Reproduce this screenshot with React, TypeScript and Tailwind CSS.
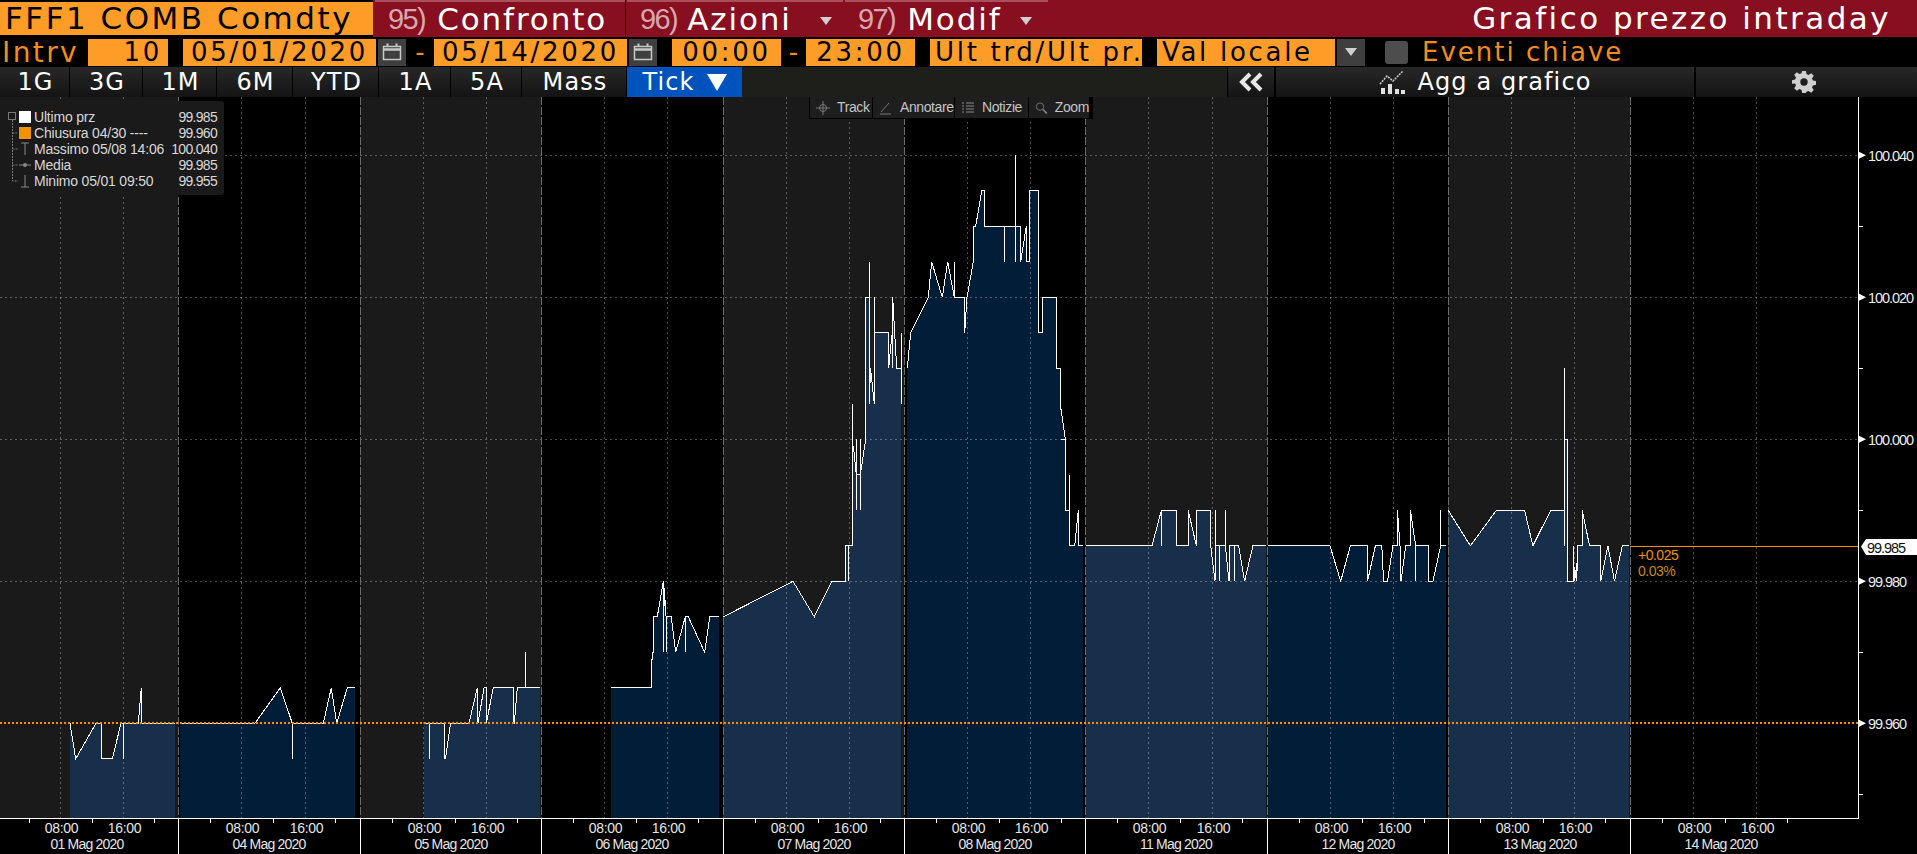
import React from "react";

type P = [number, number];
const Y = (n: number) => 155.3 + 35.5 * n;
const LIGHT = "#172f4a";
const DARK = "#021d38";

const days: { fill: string; pts: P[] }[] = [
  { fill: LIGHT, pts: [[70,16],[75.7,17],[96,16],[101.3,16],[101.3,17],[112.3,17],[121,16],[123.3,16],[123.3,17],[123.3,16],[138.3,16],[141.3,15],[141.5,16],[175,16]] },
  { fill: DARK, pts: [[179.5,16],[255,16],[280.3,15],[292.3,16],[292.3,17],[292.3,16],[323.3,16],[331.3,15],[336.7,16],[347.3,15],[355,15]] },
  { fill: LIGHT, pts: [[424,16],[429.3,16],[429.3,17],[429.3,16],[444.5,16],[444.5,17],[445.5,17],[450.5,16],[469,16],[477.3,15],[478,16],[484,15],[486.3,15],[486.3,16],[493.3,15],[513.3,15],[513.3,16],[514.3,16],[517.3,15],[525.3,15],[525.3,14],[525.3,15],[540,15]] },
  { fill: DARK, pts: [[611,15],[651.3,15],[651.3,14.2],[652.3,14.2],[652.3,14],[653.3,14],[653.3,13],[657.3,13],[663.3,12],[663.3,14],[664.3,12.2],[666.7,13.3],[666.7,14],[666.7,13],[671.3,13],[675.7,14],[685.3,13],[685.3,14],[685.3,13],[688.3,13],[704.7,14],[709.7,13],[719,13]] },
  { fill: LIGHT, pts: [[723.3,13],[793,12],[814.3,13],[831.7,12],[845.7,12],[845.7,11],[848.5,11],[848.5,12],[848.5,11],[852.3,11],[852.3,7],[852.3,8.3],[853.5,8.2],[856.3,9],[856.3,8],[856.3,10],[856.3,9],[860.3,9],[860.3,8],[860.3,10],[860.3,9],[865.7,8],[865.7,4],[869.3,4],[869.3,3],[869.3,7],[870.5,6],[874.3,7],[874.3,4],[874.3,5],[888.7,5],[888.7,6],[891.7,5.1],[892.7,5],[892.7,4],[892.7,6],[892.7,4],[896.7,6],[901.3,6],[901.3,5],[901.3,7],[901.3,6]] },
  { fill: DARK, pts: [[907.3,6],[910.7,5],[928.3,4],[931.7,3],[942.3,4],[947.7,3],[954.3,4],[954.3,3],[954.3,4],[964.7,4],[964.7,5],[967,4],[973.3,3],[973.3,2],[975.7,2],[981.7,1],[984.3,1],[984.3,2],[1004.3,2],[1004.3,3],[1004.3,2],[1015.3,2],[1015.3,0],[1015.3,3],[1015.3,2],[1020.7,2],[1020.7,3],[1026.3,2],[1026.6,3],[1029.7,3],[1029.7,1],[1038.3,1],[1038.3,5],[1042.7,5],[1042.7,4],[1056.7,4],[1056.7,6],[1060.7,6],[1060.7,7.1],[1065.3,8],[1060.9,8],[1065.7,8],[1065.7,10],[1069.3,10],[1069.3,9],[1069.3,11],[1074.7,11],[1078.3,10],[1078.6,11],[1083,11]] },
  { fill: LIGHT, pts: [[1086,11],[1152,11],[1161.4,10],[1161.4,11],[1161.4,10],[1176.8,10],[1176.8,11],[1188.2,11],[1188.2,10],[1196.4,11],[1196.8,10],[1210.7,10],[1210.7,11],[1215,12],[1215.7,10],[1215.7,11],[1219,11],[1219,12],[1219,11],[1225.4,11],[1225.4,10],[1225.4,11],[1229,12],[1229.5,11],[1234.3,11],[1234.3,12],[1234.3,11],[1238.6,11],[1244.6,12],[1252.9,11],[1266.4,11]] },
  { fill: DARK, pts: [[1268,11],[1330,11],[1340.7,12],[1350.4,11],[1367.5,11],[1367.5,12],[1375.4,11],[1381.8,11],[1383.6,12],[1387.5,12],[1392.9,11],[1397.5,11],[1397.5,10],[1400,11],[1401,12],[1405.7,11],[1410.4,11],[1410.4,10],[1415.7,11],[1415.7,12],[1415.7,11],[1428.2,11],[1428.2,12],[1432.9,12],[1440.7,11],[1440.7,10],[1440.7,11],[1446,11]] },
  { fill: LIGHT, pts: [[1448.2,10],[1470.4,11],[1496.4,10],[1524.6,10],[1532.9,11],[1550.7,10],[1564.3,10],[1564.3,6],[1564.3,11],[1564.3,8],[1567.9,8],[1567.9,12],[1573.2,12],[1573.2,11],[1574.6,12],[1576.8,11.5],[1576.8,12],[1577.5,11],[1582.3,11],[1582.3,10],[1589.5,11],[1600.7,11],[1600.7,12],[1607.9,11],[1614.5,12],[1622.3,11],[1629.3,11]] },
];

const shades = [[0,178.5],[360,541.5],[723,904.5],[1085.5,1267.5],[1448,1630]];
const seps = [178.5,360.5,541.5,723,904.5,1085.5,1267.5,1448.5,1630.5];
const grids = [60.5,123.5,241.5,305.5,423.5,486.5,604.5,667.5,786.5,849.5,967.5,1030.5,1148.5,1212.5,1330.5,1393.5,1511.5,1574.5,1693.5,1756.5];
const dayLabels: [string, number][] = [["01 Mag 2020",87],["04 Mag 2020",269],["05 Mag 2020",451],["06 Mag 2020",632],["07 Mag 2020",814],["08 Mag 2020",995],["11 Mag 2020",1176],["12 Mag 2020",1358],["13 Mag 2020",1540],["14 Mag 2020",1721]];
const ticks = [-3,178.5,360.5,541.5,723,904.5,1085.5,1267.5,1448.5,1630.5].flatMap((s) => [s + 32, s + 95, s + 157]);

function Tri({ className = "" }: { className?: string }) {
  return (
    <svg width="12" height="8" viewBox="0 0 12 8" className={className}>
      <path d="M0 0H12L6 8Z" fill="#cfcfcf" />
    </svg>
  );
}

function Cal() {
  return (
    <div className="w-[28px] h-[27px] ml-[2px] bg-[#3f3f3f] flex items-center justify-center shrink-0">
      <svg width="20" height="18" viewBox="0 0 20 18" fill="none" stroke="#c8c8c8">
        <rect x="1.5" y="3.5" width="17" height="13" strokeWidth="1.5" />
        <path d="M1 6.5H19" strokeWidth="2.5" />
        <path d="M5.5 0.5V3.5M14.5 0.5V3.5" strokeWidth="2" />
      </svg>
    </div>
  );
}

function Field({ w, ml, right, children }: { w: number; ml: number; right?: boolean; children: React.ReactNode }) {
  return (
    <div
      className={`h-[27px] bg-[#fd9c27] text-black text-[26px] leading-[27px] tracking-[2.7px] whitespace-nowrap shrink-0 flex ${right ? "justify-end" : "justify-center"}`}
      style={{ width: w, marginLeft: ml }}
    >
      {children}
    </div>
  );
}

function Tab({ w, num, label, arrow, gap, numGap = 12 }: { w: number; num: string; label: string; arrow?: boolean; gap?: number; numGap?: number }) {
  return (
    <div className="h-full bg-[#870f20] border-t-[2px] border-[#a9505c] ml-[2px] flex items-center pl-[13px] shrink-0" style={{ width: w }}>
      <span className="text-[29px] leading-none text-[#d9a6ad] tracking-[-1.6px] font-['Liberation_Sans',sans-serif]" style={{ marginRight: numGap }}>{num}</span>
      <span className="text-[31px] text-white tracking-[1.9px] leading-none">{label}</span>
      {arrow && <span style={{ marginLeft: gap }}><Tri className="mt-[3px]" /></span>}
    </div>
  );
}

const periods: [string, number][] = [["1G",69],["3G",72],["1M",73],["6M",75],["YTD",85],["1A",71],["5A",70],["Mass",104]];

function Legend() {
  const rows: [React.ReactNode, string, string][] = [
    [<span className="block w-[12px] h-[12px] bg-white" />, "Ultimo prz", "99.985"],
    [<span className="block w-[12px] h-[12px] bg-[#f39200]" />, "Chiusura 04/30 ----", "99.960"],
    [<svg width="10" height="14" viewBox="0 0 10 14"><path d="M1 1H9M5 1V13" stroke="#888" fill="none" /></svg>, "Massimo 05/08 14:06", "100.040"],
    [<svg width="12" height="8" viewBox="0 0 12 8"><path d="M0 4H12" stroke="#888" /><circle cx="6" cy="4" r="2" fill="#888" /></svg>, "Media", "99.985"],
    [<svg width="10" height="14" viewBox="0 0 10 14"><path d="M1 13H9M5 1V13" stroke="#888" fill="none" /></svg>, "Minimo 05/01 09:50", "99.955"],
  ];
  return (
    <div className="absolute left-0 top-[4px] w-[224px] h-[94px] bg-[#1a1a1a] rounded-r-[3px] pt-[8px] pl-[18px] pr-[7px] text-[14px] leading-[16px] text-[#d8d8d8] font-['Liberation_Sans',sans-serif]">
      <svg width="16" height="78" viewBox="0 0 16 78" className="absolute left-[7px] top-[10px]" fill="none" stroke="#777" strokeDasharray="2 1">
        <rect x="1.5" y="1.5" width="7" height="7" strokeDasharray="none" />
        <path d="M5.5 9V70H11M5.5 22H10M5.5 38H11M5.5 54H11" />
      </svg>
      {rows.map(([icon, label, val], i) => (
        <div key={i} className="flex items-center h-[16px]">
          <span className="w-[16px] flex justify-center items-center shrink-0 -ml-[1px]">{icon}</span>
          <span className="ml-[1px] whitespace-nowrap tracking-[-0.2px]">{label}</span>
          <span className="ml-auto tracking-[-0.7px]">{val}</span>
        </div>
      ))}
    </div>
  );
}

function Toolbar() {
  const items: [number, React.ReactNode, string][] = [
    [62, <svg width="14" height="14" viewBox="0 0 14 14" fill="none" stroke="#777"><circle cx="7" cy="7" r="3.5" /><path d="M7 0V14M0 7H14" /></svg>, "Track"],
    [81, <svg width="14" height="14" viewBox="0 0 14 14" fill="none" stroke="#777"><path d="M2 11L10 2M1 13H12" /></svg>, "Annotare"],
    [73, <svg width="14" height="14" viewBox="0 0 14 14" fill="none" stroke="#888"><path d="M1 2H3M5 2H13M1 5H3M5 5H13M1 8H3M5 8H13M1 11H3M5 11H13" /></svg>, "Notizie"],
    [60, <svg width="14" height="14" viewBox="0 0 14 14" fill="none" stroke="#777"><circle cx="5.5" cy="5.5" r="4" /><path d="M8.5 8.5L13 13" strokeWidth="2" /></svg>, "Zoom"],
  ];
  return (
    <div className="absolute left-[809px] top-0 h-[22px] w-[284px] bg-black flex px-[1px] pb-[1px] gap-[1px] text-[14px] tracking-[-0.4px] text-[#c4c4c4] font-['Liberation_Sans',sans-serif]">
      {items.map(([w, icon, label]) => (
        <div key={label} className="h-full bg-[#1e1e1e] flex items-center pl-[6px] gap-[7px]" style={{ width: w }}>
          {icon}
          <span>{label}</span>
        </div>
      ))}
    </div>
  );
}

function Chart() {
  return (
    <div className="relative h-[757px] bg-black overflow-hidden">
      <svg width="1917" height="757" viewBox="0 97 1917 757" className="block">
        {shades.map(([a, b]) => (
          <rect key={a} x={a} y={97} width={b - a} height={721} fill="#1a1a1a" />
        ))}
        {days.map((d, i) => {
          const first = d.pts[0][0];
          const last = d.pts[d.pts.length - 1][0];
          const pts = d.pts.map(([x, n]) => `${x},${Y(n)}`).join(" ");
          return <polygon key={i} points={`${first},818 ${pts} ${last},818`} fill={d.fill} shapeRendering="crispEdges" />;
        })}
        <g stroke="#ffffff" strokeOpacity="0.3" strokeWidth="1" strokeDasharray="2 3" shapeRendering="crispEdges">
          {grids.map((x) => (
            <line key={x} x1={x} x2={x} y1={97} y2={818} />
          ))}
          {[0, 4, 8, 12].map((n) => (
            <line key={n} x1={0} x2={1858} y1={Math.round(Y(n)) + 0.5} y2={Math.round(Y(n)) + 0.5} />
          ))}
        </g>
        <g stroke="#6a6a6a" strokeWidth="1" strokeDasharray="8 2" shapeRendering="crispEdges">
          {seps.map((x) => (
            <line key={x} x1={x} x2={x} y1={97} y2={818} />
          ))}
        </g>
        {days.map((d, i) => (
          <polyline key={i} points={d.pts.map(([x, n]) => `${x},${Y(n)}`).join(" ")} fill="none" stroke="#fff" strokeWidth="1" shapeRendering="crispEdges" />
        ))}
        <line x1={0} x2={1858} y1={723} y2={723} stroke="#f39200" strokeWidth="2" strokeDasharray="2.4 1.6" shapeRendering="crispEdges" />
        <line x1={1630} x2={1858} y1={546.5} y2={546.5} stroke="#f39200" strokeWidth="1" shapeRendering="crispEdges" />
        <text x={1638} y={560} className="font-['Liberation_Sans',sans-serif] text-[14px] tracking-[-0.5px] fill-[#f39200]">+0.025</text>
        <text x={1638} y={576} className="font-['Liberation_Sans',sans-serif] text-[14px] tracking-[-0.5px] fill-[#c98a10]">0.03%</text>

        {/* axes */}
        <path d="M1858.5 97V818.5H0" fill="none" stroke="#fff" strokeWidth="1.2" shapeRendering="crispEdges" />
        {[2, 6, 10, 14, 18].map((n) => (
          <line key={n} x1={1858} x2={1863} y1={Math.round(Y(n)) + 0.5} y2={Math.round(Y(n)) + 0.5} stroke="#fff" shapeRendering="crispEdges" />
        ))}
        {([["100.040", 0], ["100.020", 4], ["100.000", 8], ["99.980", 12], ["99.960", 16]] as [string, number][]).map(([t, n]) => (
          <g key={t}>
            <path d={`M1859 ${Y(n) - 3.5}L1866 ${Y(n)}L1859 ${Y(n) + 3.5}Z`} fill="#fff" />
            <text x={1868} y={Y(n) + 5.5} className="font-['Liberation_Sans',sans-serif] text-[14.5px] fill-[#ececec]" textLength={t.length > 6 ? 46 : 39}>{t}</text>
          </g>
        ))}
        <path d="M1861 546.5L1866 539H1917V555H1866Z" fill="#fff" />
        <text x={1867} y={552.5} textLength={39} className="font-['Liberation_Sans',sans-serif] text-[14.5px] fill-[#111]">99.985</text>

        {seps.map((x) => (
          <line key={x} x1={x} x2={x} y1={818} y2={854} stroke="#fff" shapeRendering="crispEdges" />
        ))}
        {ticks.map((x) => (
          <line key={x} x1={x} x2={x} y1={818} y2={823} stroke="#fff" shapeRendering="crispEdges" />
        ))}
        {grids.map((x, i) => (
          <text key={x} x={x + 1} y={833} textAnchor="middle" className="font-['Liberation_Sans',sans-serif] text-[14px] tracking-[-0.3px] fill-[#e6e6e6]">{i % 2 === 0 ? "08:00" : "16:00"}</text>
        ))}
        {dayLabels.map(([t, x]) => (
          <text key={t} x={x} y={849} textAnchor="middle" className="font-['Liberation_Sans',sans-serif] text-[14px] tracking-[-0.8px] fill-[#e6e6e6]">{t}</text>
        ))}
      </svg>
      <Legend />
      <Toolbar />
    </div>
  );
}

export default function App() {
  return (
    <div className="w-[1917px] h-[854px] bg-black overflow-hidden font-['DejaVu_Sans',sans-serif]">
      {/* title row */}
      <div className="h-[37px] flex bg-[#870f20]">
        <div className="w-[373px] h-full shrink-0 bg-black pt-[2px] pb-[2px]">
          <div className="h-full bg-[#fd9c27] text-black text-[31px] leading-[33px] tracking-[2.5px] pl-[5px] whitespace-nowrap">FFF1 COMB Comdty</div>
        </div>
        <Tab w={250} num="95)" label="Confronto" />
        <div className="w-[1px] bg-black -mr-[1px] shrink-0" />
        <Tab w={216} num="96)" label="Azioni" arrow gap={28} numGap={10} />
        <Tab w={203} num="97)" label="Modif" arrow gap={18} />
        <div className="ml-[2px] flex-1 bg-[#870f20] text-white text-[31px] leading-[37px] tracking-[2.45px] text-right pr-[26px]">Grafico prezzo intraday</div>
      </div>
      {/* parameters row */}
      <div className="h-[30px] flex items-center">
        <div className="w-[84px] pl-[2px] shrink-0 text-[28px] text-[#f28c1c] leading-[27px] tracking-[2.4px]">Intrv</div>
        <Field w={80} ml={4} right><span className="pr-[6px]">10</span></Field>
        <Field w={193} ml={15}>05/01/2020</Field>
        <Cal />
        <span className="w-[28px] text-center text-[26px] leading-[27px] text-[#f28c1c]">-</span>
        <Field w={193} ml={0}>05/14/2020</Field>
        <Cal />
        <Field w={109} ml={15}>00:00</Field>
        <span className="w-[25px] text-center text-[26px] leading-[27px] text-[#f28c1c]">-</span>
        <Field w={109} ml={0}>23:00</Field>
        <Field w={212} ml={15}><span className="pl-[5px] w-full">Ult trd/Ult pr.</span></Field>
        <Field w={178} ml={15}><span className="pl-[5px] w-full">Val locale</span></Field>
        <div className="w-[28px] h-[27px] ml-[2px] bg-[#3f3f3f] flex items-center justify-center shrink-0"><Tri /></div>
        <div className="w-[23px] h-[23px] ml-[20px] bg-[#4d4d4d] rounded-[3px] shrink-0" />
        <span className="ml-[14px] text-[26px] leading-[27px] text-[#f28c1c] tracking-[2px] whitespace-nowrap">Eventi chiave</span>
      </div>
      {/* period row */}
      <div className="h-[30px] flex text-white text-[24px] leading-none tracking-[1.1px]">
        {periods.map(([t, w]) => (
          <div key={t} className="h-full bg-gradient-to-b from-[#282828] to-[#141414] mr-[1px] flex items-center justify-center shrink-0 pl-[2px]" style={{ width: w }}>{t}</div>
        ))}
        <div className="w-[115px] h-full bg-[#0052bd] flex items-center justify-center gap-[12px] shrink-0">
          <span>Tick</span>
          <svg width="20" height="17" viewBox="0 0 20 17"><path d="M0 0H20L10 17Z" fill="#fff" /></svg>
        </div>
        <div className="flex-1 bg-[#1e1e1a]" />
        <div className="w-[46px] h-full ml-[1px] bg-gradient-to-b from-[#282828] to-[#141414] flex items-center justify-center">
          <svg width="26" height="20" viewBox="0 0 26 20" fill="none" stroke="#e8e8e8" strokeWidth="4"><path d="M12 2L4 10L12 18M23 2L15 10L23 18" /></svg>
        </div>
        <div className="w-[418px] h-full ml-[2px] bg-gradient-to-b from-[#282828] to-[#141414] flex items-center justify-center gap-[13px]">
          <svg width="26" height="24" viewBox="0 0 26 24" fill="none">
            <path d="M1 14L8 6L14 11L24 1" stroke="#cfcfcf" strokeWidth="1.5" strokeDasharray="2 1" />
            <path d="M2 24V18H6V24ZM9 24V14H13V24ZM16 24V19H20V24ZM22 24V20H26V24Z" fill="#e0e0e0" />
          </svg>
          <span>Agg a grafico</span>
        </div>
        <div className="w-[221px] h-full ml-[2px] bg-gradient-to-b from-[#282828] to-[#141414] flex items-center justify-center pr-[6px]">
          <svg width="24" height="24" viewBox="0 0 26 26">
            <path fill="#cfcfcf" fillRule="evenodd" d="M11 1h4l.7 3.4 2.2.9 2.9-1.9 2.8 2.8-1.9 2.9.9 2.2 3.4.7v4l-3.4.7-.9 2.2 1.9 2.9-2.8 2.8-2.9-1.9-2.2.9L15 25h-4l-.7-3.4-2.2-.9-2.9 1.9-2.8-2.8 1.9-2.9-.9-2.2L0 15v-4l3.4-.7.9-2.2-1.9-2.9 2.8-2.8 2.9 1.9 2.2-.9ZM13 9a4 4 0 1 0 0 8 4 4 0 0 0 0-8Z" />
          </svg>
        </div>
      </div>
      <Chart />
    </div>
  );
}
